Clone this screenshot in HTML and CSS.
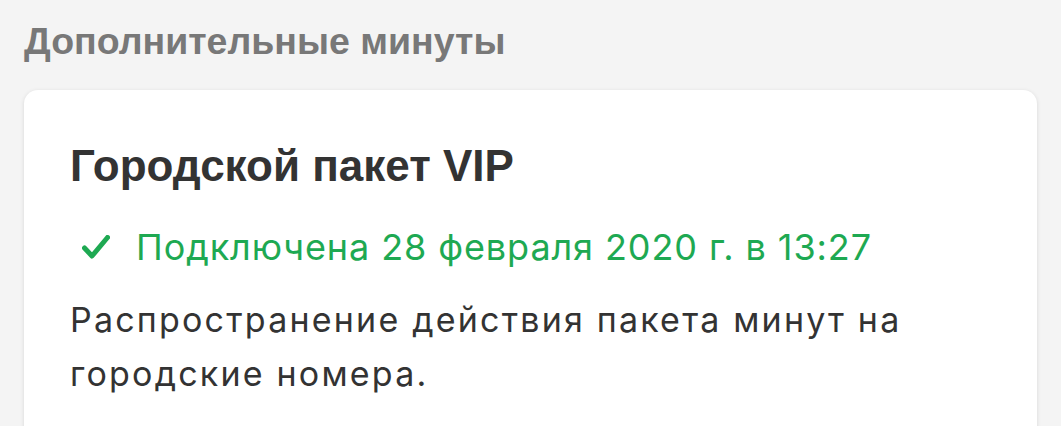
FILE: index.html
```html
<!DOCTYPE html>
<html lang="ru">
<head>
    <meta charset="UTF-8">
    <meta name="viewport" content="width=device-width, initial-scale=1.0">
    <title>Дополнительные минуты</title>
    <link rel="stylesheet" href="styles.css">
</head>
<body>

<div class="page">
    <h2 class="section-title">Дополнительные минуты</h2>

    <div class="card">
        <h3 class="card-title">Городской пакет VIP</h3>

        <div class="status">
            <svg class="check" viewBox="0 0 28 24" width="28" height="24">
                <path d="M2.5 13 L10 21 L25.5 2.5" fill="none" stroke="#1ea952" stroke-width="5" stroke-linecap="round" stroke-linejoin="round"/>
            </svg>
            <span>Подключена 28 февраля 2020 г. в 13:27</span>
        </div>

        <p class="description">Распространение действия пакета минут на городские номера.</p>
    </div>
</div>

</body>
</html>
```

FILE: styles.css
```css
body {
    margin: 0;
    background-color: #f4f4f4;
    font-family: "Liberation Sans", Arial, sans-serif;
}
.page {
    padding: 16px 24px 0;
}
.section-title {
    margin: 0 0 24px;
    font-size: 37.5px;
    font-weight: bold;
    color: #787878;
    line-height: 50px;
}
.card {
    background-color: #fff;
    border-radius: 14px;
    box-shadow: 0 1px 4px rgba(0, 0, 0, 0.12);
    padding: 48px 46px 40px;
}
.card-title {
    margin: 0 0 28px;
    font-size: 44px;
    font-weight: bold;
    color: #333;
    line-height: 56px;
}
.status {
    display: flex;
    align-items: center;
    gap: 26px;
    padding-left: 12px;
    color: #1ea952;
    font-family: Inter, sans-serif;
    font-size: 36px;
    letter-spacing: 0.9px;
    line-height: 50px;
}
.check {
    flex-shrink: 0;
}
.description {
    margin: 21px 0 0;
    width: 900px;
    font-family: Inter, sans-serif;
    font-size: 34px;
    letter-spacing: 2.2px;
    line-height: 54px;
    color: #333;
}
```
